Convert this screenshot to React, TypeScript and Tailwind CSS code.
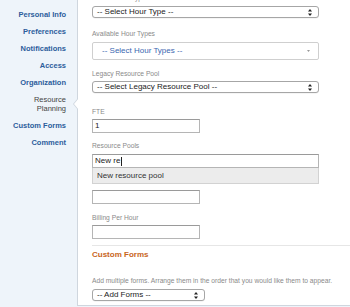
import React from 'react';

const NAV: { label: string[]; active?: boolean }[] = [
  { label: ['Personal Info'] },
  { label: ['Preferences'] },
  { label: ['Notifications'] },
  { label: ['Access'] },
  { label: ['Organization'] },
  { label: ['Resource', 'Planning'], active: true },
  { label: ['Custom Forms'] },
  { label: ['Comment'] },
];

function UpDown() {
  return (
    <svg width="4" height="7" viewBox="0 0 4 7" className="shrink-0">
      <path d="M2 0 L4 2.6 H0 Z" fill="#222" />
      <path d="M2 7 L4 4.4 H0 Z" fill="#222" />
    </svg>
  );
}

function NativeSelect({ text, width }: { text: string; width: string }) {
  return (
    <div
      className={`flex h-[12px] items-center justify-between rounded-[3px] border border-[#a6a6a6] bg-white pl-[4px] pr-[6px] text-[8px] leading-none text-[#222] shadow-[0_0.5px_0_rgba(0,0,0,0.08)] ${width}`}
    >
      <span>{text}</span>
      <UpDown />
    </div>
  );
}

function Label({ children, className = '' }: { children: React.ReactNode; className?: string }) {
  return <div className={`h-[8px] text-[6.7px] leading-[8px] text-[#8a8a8a] ${className}`}>{children}</div>;
}

function TextBox({ width, className = '', children }: { width: string; className?: string; children?: React.ReactNode }) {
  return (
    <div
      className={`flex h-[14px] items-center border border-[#b5b5b5] border-t-[#9a9a9a] bg-white px-[2px] text-[8px] leading-none text-[#222] ${width} ${className}`}
    >
      {children}
    </div>
  );
}

export default function App() {
  return (
    <div className="flex h-[307px] w-[350px] overflow-hidden bg-[#eef4fa] font-['Liberation_Sans',Arial,sans-serif]">
      <nav className="flex w-[77px] shrink-0 flex-col items-end pr-[11px] pt-[6px]">
        {NAV.map((item) => (
          <div
            key={item.label.join(' ')}
            className={`py-[4px] text-right text-[7.5px] leading-[9px] ${
              item.active ? 'font-normal text-[#444]' : 'font-bold text-[#2c5d9c]'
            }`}
          >
            {item.label.map((l) => (
              <div key={l}>{l}</div>
            ))}
          </div>
        ))}
      </nav>

      <div className="relative h-[306px] flex-1 border-b border-l border-[#cfd6de] bg-white pl-[14px]">
        {/* pointer notch next to the active menu item */}
        <div className="absolute left-[-5px] top-[98px] h-0 w-0 border-y-[6px] border-r-[5px] border-y-transparent border-r-[#cfd6de]" />
        <div className="absolute left-[-4px] top-[98px] h-0 w-0 border-y-[6px] border-r-[5px] border-y-transparent border-r-white" />

        <Label className="mt-[-6px]">Default Hour Type</Label>
        <div className="mt-[4px]">
          <NativeSelect text="-- Select Hour Type --" width="w-[227px]" />
        </div>

        <Label className="mt-[12px]">Available Hour Types</Label>
        <div className="mt-[4px] flex h-[18px] w-[227px] items-center justify-between rounded-[2px] border border-[#cfcfcf] bg-white pl-[9px] pr-[8px] text-[8px] leading-none text-[#3a67b0]">
          <span>-- Select Hour Types --</span>
          <svg width="3" height="2" viewBox="0 0 3 2">
            <path d="M0 0 H3 L1.5 2 Z" fill="#999" />
          </svg>
        </div>

        <Label className="mt-[10px]">Legacy Resource Pool</Label>
        <div className="mt-[3px]">
          <NativeSelect text="-- Select Legacy Resource Pool --" width="w-[227px]" />
        </div>

        <Label className="mt-[15px]">FTE</Label>
        <TextBox width="w-[108px]" className="mt-[3px]">
          1
        </TextBox>

        <Label className="mt-[9px]">Resource Pools</Label>
        <TextBox width="w-[227px]" className="mt-[4px] border-[#999]">
          New re<span className="ml-[0.5px] inline-block h-[9px] w-[1px] bg-[#222]" />
        </TextBox>
        <div className="flex h-[16px] w-[227px] items-center border border-t-0 border-[#d2d2d2] bg-[#ececec] px-[4px] text-[8px] leading-none text-[#333]">
          New resource pool
        </div>

        <TextBox width="w-[108px]" className="mt-[6px]" />

        <Label className="mt-[10px]">Billing Per Hour</Label>
        <TextBox width="w-[108px]" className="mt-[3px]" />

        <div className="mt-[6px] h-px bg-[#e6e6e6]" />

        <div className="mt-[4px] h-[10px] text-[8px] font-bold leading-[10px] text-[#c8651b]">Custom Forms</div>

        <Label className="mt-[17px] whitespace-nowrap">
          Add multiple forms. Arrange them in the order that you would like them to appear.
        </Label>
        <div className="mt-[4px]">
          <NativeSelect text="-- Add Forms --" width="w-[113px]" />
        </div>
      </div>
    </div>
  );
}
